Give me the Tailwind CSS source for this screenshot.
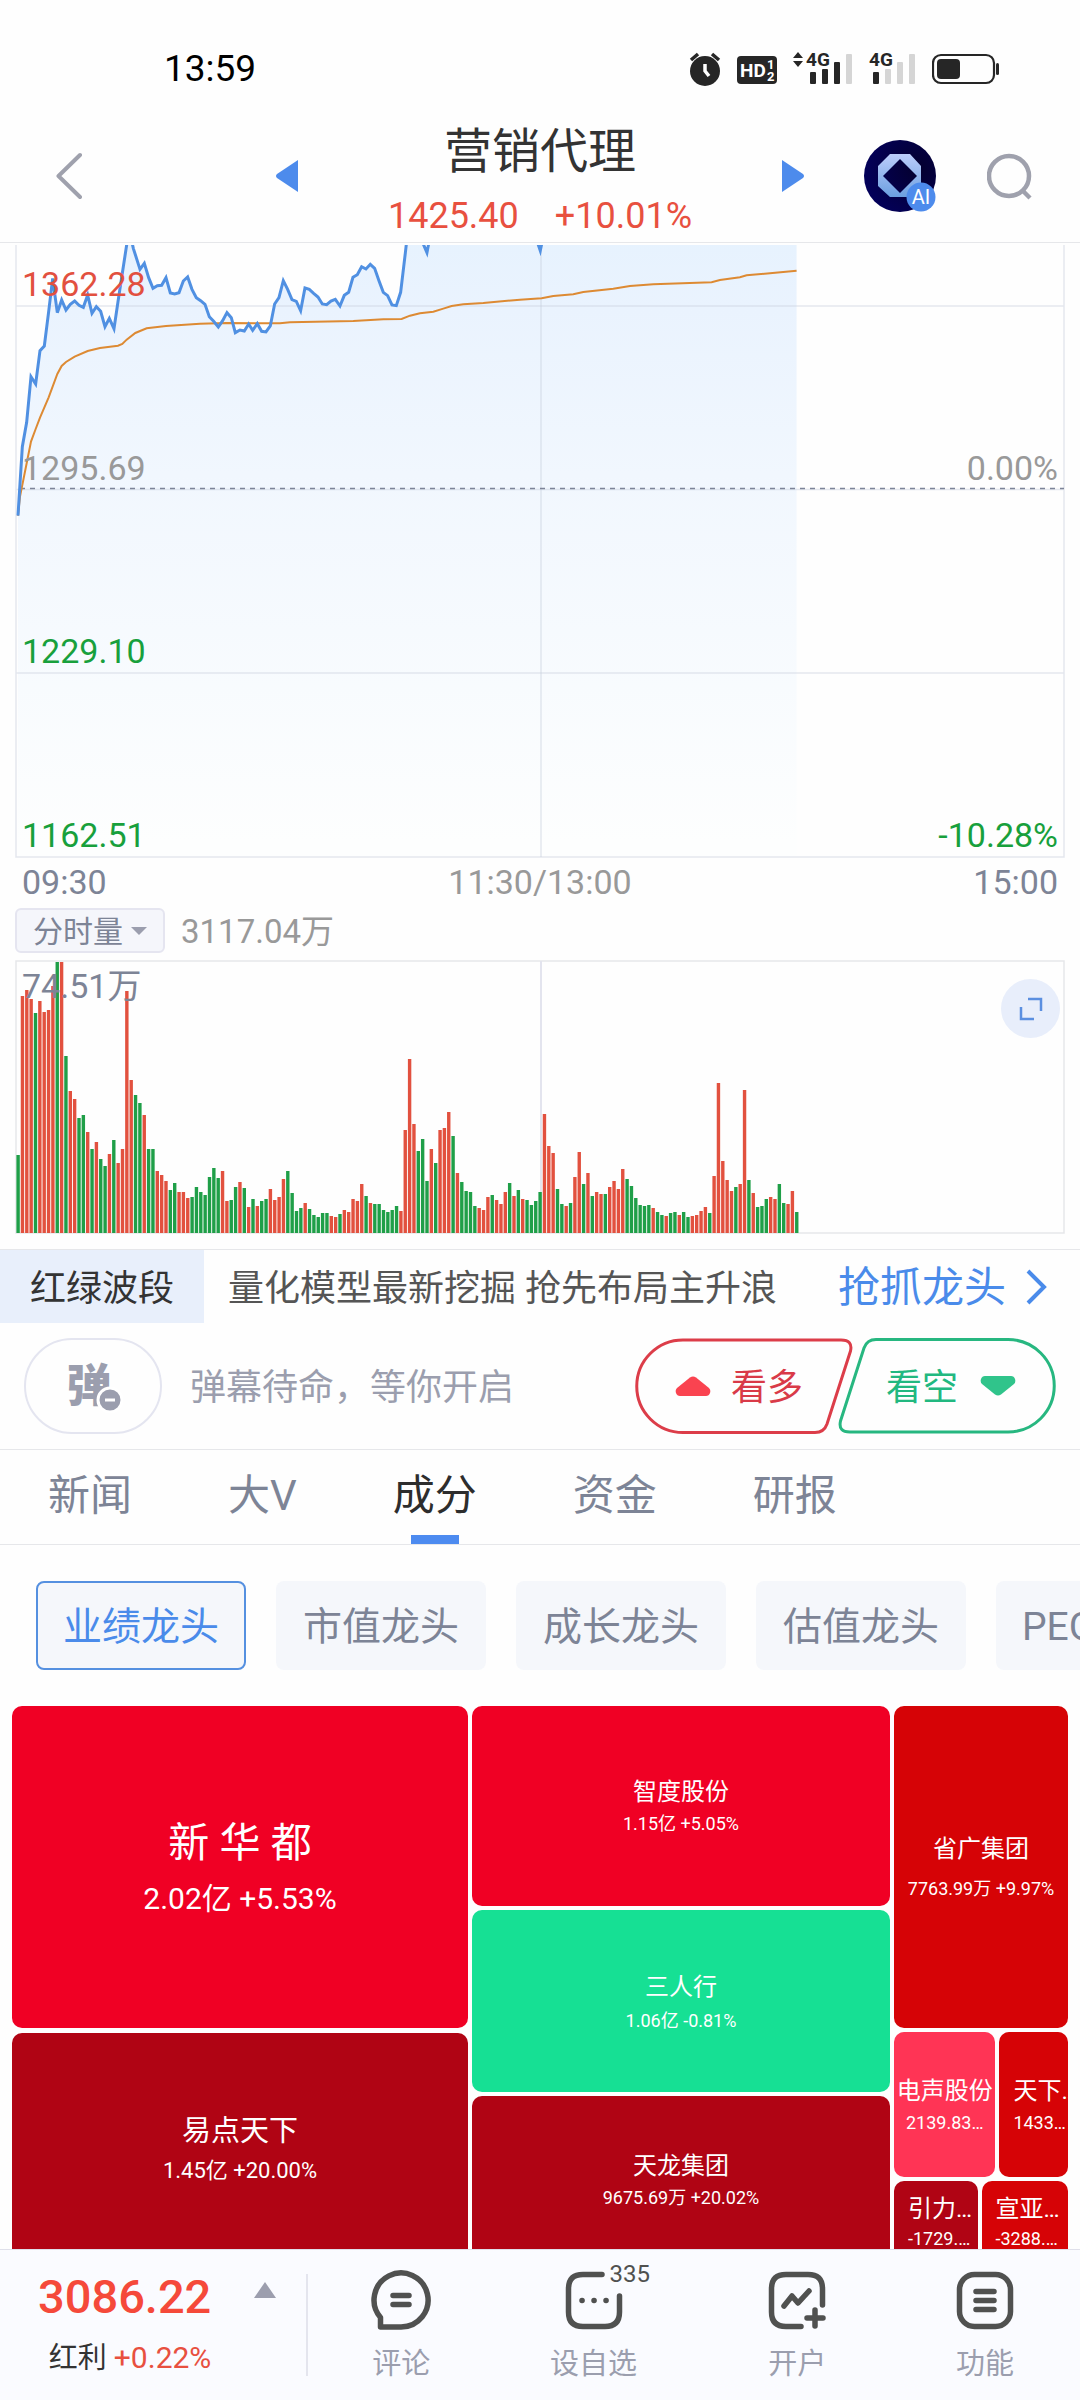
<!DOCTYPE html>
<html lang="zh-CN">
    <head>
        <meta charset="utf-8" />
        <meta name="viewport" content="width=device-width, initial-scale=1" />
        <title>营销代理</title>
        <script src="https://cdn.jsdelivr.net/npm/@tailwindcss/browser@4"></script>
    </head>
<body class="flex flex-col h-screen overflow-hidden bg-[#fefefe] font-['Roboto','Noto_Sans_CJK_SC',sans-serif] text-[#333]">

<!-- Status bar -->
<div class="flex items-center justify-between h-[110px] shrink-0 pt-7 pl-41 pr-20">
    <span class="text-[37px] text-black">13:59</span>
    <div class="flex gap-4">
        <svg class="w-8 h-9" viewBox="0 0 32 36" fill="#262626">
            <circle cx="16" cy="20" r="15"/>
            <path d="M2 9 L9 3 M30 9 L23 3" stroke="#262626" stroke-width="3.5"/>
            <path d="M16 13 V20 L20 25" fill="none" stroke="#fff" stroke-width="3.5"/>
        </svg>
        <svg class="w-10 h-9" viewBox="0 0 40 36">
            <rect y="5" width="40" height="28" rx="4" fill="#262626"/>
            <g fill="#fff" font-weight="700">
                <text x="3" y="26" font-size="19">HD</text>
                <text x="30" y="18" font-size="13">1</text>
                <text x="30" y="30" font-size="13">2</text>
            </g>
        </svg>
        <svg class="w-15 h-9 overflow-visible" viewBox="0 0 60 36" fill="#262626">
            <path d="M0 7 L5 1 L10 7 Z M0 10 H10 L5 16 Z"/>
            <text x="13" y="15" font-size="19" font-weight="700">4G</text>
            <rect x="17" y="21" width="6" height="12" rx="1"/>
            <rect x="29" y="18" width="6" height="15" rx="1"/>
            <rect x="41" y="11" width="6" height="22" rx="1"/>
            <rect x="53" y="3" width="6" height="30" rx="1" fill="#d5d5d5"/>
        </svg>
        <svg class="w-[47px] h-9 overflow-visible" viewBox="0 0 47 36" fill="#d5d5d5">
            <text x="0" y="15" font-size="19" font-weight="700" fill="#262626">4G</text>
            <rect x="4" y="21" width="6" height="12" rx="1" fill="#262626"/>
            <rect x="16" y="18" width="6" height="15" rx="1"/>
            <rect x="28" y="11" width="6" height="22" rx="1"/>
            <rect x="40" y="3" width="6" height="30" rx="1"/>
        </svg>
        <svg class="w-17 h-9" viewBox="0 0 68 36">
            <rect x="1" y="4" width="61" height="28" rx="8" fill="none" stroke="#262626" stroke-width="2.2"/>
            <rect x="5" y="8" width="23" height="20" rx="4" fill="#262626"/>
            <rect x="64" y="12" width="3" height="12" rx="1.5" fill="#262626"/>
        </svg>
    </div>
</div>

<!-- Header -->
<header class="flex items-center h-[133px] shrink-0 pl-14 pr-12 border-b border-[#e6e7ea]">
    <div class="flex items-center justify-between w-[242px]">
        <button aria-label="返回">
            <svg class="w-7 h-12" viewBox="0 0 28 48" fill="none" stroke="#9fa1ad" stroke-width="4" stroke-linecap="round" stroke-linejoin="round"><path d="M24 3 L2.500 24 L24 45"/></svg>
        </button>
        <button aria-label="上一个">
            <svg class="w-[22px] h-8" viewBox="0 0 22 32" fill="#4d8bec"><path d="M22 0 V32 L1 18 Q-1 16 1 14 Z"/></svg>
        </button>
    </div>
    <div class="flex-1 flex flex-col items-center gap-2 pt-2">
        <h1 class="text-5xl leading-16">营销代理</h1>
        <p class="flex gap-9 text-4xl leading-12 text-[#e8503f]"><span>1425.40</span><span>+10.01%</span></p>
    </div>
    <div class="flex items-center">
        <button aria-label="下一个">
            <svg class="w-[22px] h-8" viewBox="0 0 22 32" fill="#4d8bec"><path d="M0 0 V32 L21 18 Q23 16 21 14 Z"/></svg>
        </button>
        <button class="ml-15" aria-label="AI助手">
            <svg class="w-18 h-18" viewBox="0 0 72 72">
                <defs>
                    <linearGradient id="gem" x1="0" y1="0" x2="0" y2="1"><stop offset="0" stop-color="#bccdfb"/><stop offset="1" stop-color="#6b9fe0"/></linearGradient>
                    <radialGradient id="night" cx=".75" cy=".4" r=".8"><stop offset="0" stop-color="#04002e"/><stop offset="1" stop-color="#03005c"/></radialGradient>
                </defs>
                <circle cx="36" cy="36" r="36" fill="url(#night)"/>
                <path d="M26 14 H46 L57 26 V46 L46 57 H26 L14 46 V26 Z M36 19 L19 36 L36 53 L53 36 Z" fill="url(#gem)" fill-rule="evenodd"/>
                <circle cx="57" cy="57" r="14.500" fill="#4d8bec"/>
                <text x="57" y="64" font-size="20" text-anchor="middle" fill="#fff">AI</text>
            </svg>
        </button>
        <button class="ml-[51px]" aria-label="搜索">
            <svg class="w-[45px] h-12" viewBox="0 0 45 48" fill="none" stroke="#9fa1ad" stroke-width="4.500"><circle cx="22" cy="24" r="20"/><path d="M35 38 L43 46"/></svg>
        </button>
    </div>
</header>

<!-- Price chart -->
<svg class="w-full shrink-0 mt-[2px]" viewBox="0 0 1080 613">
    <defs>
        <linearGradient id="area" gradientUnits="userSpaceOnUse" x1="0" y1="0" x2="0" y2="1836">
            <stop offset="0" stop-color="#e6f2fe"/><stop offset=".13" stop-color="#eaf3fe"/><stop offset=".4" stop-color="#f1f7fe"/><stop offset="1" stop-color="#fdfefe"/>
        </linearGradient>
    </defs>
    <g transform="translate(0 -15) scale(.3333)">
        <polygon id="fill" fill="url(#area)"/>
    </g>
    <g fill="none" stroke="#c5cbdc" stroke-opacity=".45" stroke-width="1.500">
        <path d="M16 0 V612 H1064 V0 M16 61 H1064 M16 244.500 H1064 M16 428 H1064"/>
        <path d="M541 0 V612"/>
    </g>
    <path d="M20 243.500 H1064" stroke="#7d8498" stroke-width="1.500" stroke-dasharray="5 5"/>
    <g transform="translate(0 -15) scale(.3333)" fill="none">
        <polyline stroke="#dd8a33" stroke-width="6" points="54,857 60,800 80,700 93,635 107,597 120,563 146,502 172,432 185,408 198,396 224,380 263,363 300,354 354,347 367,342 380,329 406,309 440,295 498,288 600,281 680,279 840,280 870,277 1060,273 1150,268 1205,267 1230,257 1260,250 1300,245 1330,236 1355,228 1390,223 1450,219 1560,209 1625,205 1660,198 1720,193 1750,186 1840,176 1890,168 1960,163 2135,157 2160,150 2220,142 2240,136 2310,130 2390,122"/>
        <polyline id="price" stroke="#5090e2" stroke-width="9" points="54,857 67,650 80,577 93,440 107,462 120,362 133,348 146,245 158,145 172,248 185,210 198,240 211,223 224,213 237,226 250,232 263,195 276,250 289,230 302,244 315,290 328,265 342,296 354,215 367,130 380,45 390,10 400,55 420,118 433,100 446,143 459,175 472,167 485,166 498,143 511,189 524,192 537,188 550,153 563,141 576,178 589,203 602,212 615,223 628,260 641,274 655,291 668,272 681,248 694,263 706,308 720,300 733,303 746,282 758,301 772,281 785,304 798,306 811,288 824,222 837,203 850,152 863,178 876,209 889,214 902,242 915,174 928,178 941,190 954,201 967,222 980,224 993,213 1006,208 1020,228 1033,196 1046,187 1059,142 1072,134 1085,110 1098,117 1111,103 1124,115 1137,152 1150,187 1163,197 1176,225 1189,227 1202,187 1216,70 1224,0 1252,0 1281,68 1294,0 1600,0 1621,62 1634,0 2390,0"/>
    </g>
    <g font-size="34">
        <text x="22" y="51" fill="#e2503f">1362.28</text>
        <text x="22" y="235" fill="#999">1295.69</text>
        <text x="22" y="418" fill="#18a03c">1229.10</text>
        <text x="22" y="602" fill="#18a03c">1162.51</text>
        <text x="1058" y="235" text-anchor="end" fill="#999">0.00%</text>
        <text x="1058" y="602" text-anchor="end" fill="#18a03c">-10.28%</text>
    </g>
</svg>
<div class="flex justify-between shrink-0 pt-px px-[22px] text-[34px] leading-[46px] text-[#7d8496]">
    <span>09:30</span><span class="text-[#999]">11:30/13:00</span><span>15:00</span>
</div>

<!-- Volume chart -->
<div class="flex items-center gap-4 shrink-0 pl-[15px] mt-[3px]">
    <button class="flex items-center gap-2 h-[45px] px-4 rounded-md border-2 border-[#e5e5f0] bg-[#f5f6fb] text-3xl text-[#7d8496]">
        <span class="pt-[2px]">分时量</span>
        <svg class="w-4 h-2" viewBox="0 0 16 8" fill="#9b9eae"><path d="M0 0 H16 L8 8 Z"/></svg>
    </button>
    <span class="pt-[2px] text-[33px] leading-[43px] text-[#999]">3117.04万</span>
</div>
<div class="relative shrink-0 mt-[7px] pb-[15px] border-b border-[#e6e7ea]">
    <svg class="w-full" viewBox="0 0 1080 274">
        <path d="M16 273 V1 H1064 V273 Z" fill="none" stroke="#e6e7ea" stroke-width="1.500"/>
        <path d="M541 1 V273" stroke="#e3e4ee" stroke-width="2"/>
        <g id="bars"></g>
        <text x="22" y="38" font-size="34" fill="#7d8496">74.51万</text>
    </svg>
    <button class="absolute top-[19px] right-5 w-[59px] h-[59px] rounded-full bg-[#e8eefb] flex items-center justify-center" aria-label="全屏">
        <svg class="w-6 h-6" viewBox="0 0 24 24" fill="none" stroke="#5b8fe0" stroke-width="2.500"><path d="M9 2 H22 V14 M2 10 V22 H15"/></svg>
    </button>
</div>

<!-- Promo -->
<div class="flex items-center shrink-0 h-[73px] text-4xl">
    <span class="flex items-center justify-center w-[204px] h-full pt-1 bg-[#e8effb]">红绿波段</span>
    <span class="flex-1 pt-1 pl-6 text-[#555]">量化模型最新挖掘 抢先布局主升浪</span>
    <a href="#" class="flex items-center gap-[18px] pr-8 text-[42px] leading-none text-[#4a8bea]">
        <span class="pt-[2px]">抢抓龙头</span>
        <svg class="w-6 h-9" viewBox="0 0 24 36" fill="none" stroke="#4a8bea" stroke-width="4"><path d="M4 2 L20 18 L4 34"/></svg>
    </a>
</div>

<!-- Danmu -->
<div class="flex items-center shrink-0 h-[127px] px-6 text-4xl border-b border-[#e6e7ea]">
    <button class="relative w-[138px] h-24 rounded-full border-2 border-[#e4e5f0] font-black text-[45px] leading-none text-[#9b9eae]" aria-label="弹幕开关">
        <span class="pr-2">弹</span>
        <svg class="absolute left-[70px] top-[46px] w-7 h-7" viewBox="0 0 28 28"><circle cx="14" cy="14" r="12" fill="#9b9eae" stroke="#fff" stroke-width="3"/><path d="M9 14 H19" stroke="#fff" stroke-width="3"/></svg>
    </button>
    <span class="flex-1 pt-1 pl-7 text-[#9b9eae]">弹幕待命，等你开启</span>
    <button class="relative flex items-center gap-5 w-[218px] h-24 pl-10 text-[#d93a48]">
        <svg class="absolute inset-0 w-full h-full" viewBox="0 0 218 96" fill="none" stroke="#dc3d49" stroke-width="3"><path d="M48 2 H206 Q218 2 215.500 13 L192 86 Q189 94.500 180 94.500 H48 A46.250 46.250 0 0 1 48 2 Z"/></svg>
        <svg class="w-9 h-5" viewBox="0 0 36 20" fill="#fa4350"><path d="M15 1.500 Q18 -.5 21 1.500 L34 12 Q36 14 35 17 Q34 20 31 20 H5 Q2 20 1 17 Q0 14 2 12 Z"/></svg>
        <span class="pt-1">看多</span>
    </button>
    <button class="relative flex items-center gap-[22px] w-[218px] h-24 pl-12 -ml-[15px] text-[#22b880]">
        <svg class="absolute inset-0 w-full h-full" viewBox="0 0 218 96" fill="none" stroke="#27b780" stroke-width="3"><path transform="rotate(180 109 48)" d="M48 2 H206 Q218 2 215.500 13 L192 86 Q189 94.500 180 94.500 H48 A46.250 46.250 0 0 1 48 2 Z"/></svg>
        <span class="pt-1">看空</span>
        <svg class="w-9 h-5" viewBox="0 0 36 20" fill="#30c48b"><path d="M15 18.500 Q18 20.500 21 18.500 L34 8 Q36 6 35 3 Q34 0 31 0 H5 Q2 0 1 3 Q0 6 2 8 Z"/></svg>
    </button>
</div>

<!-- Tabs -->
<nav class="flex gap-24 shrink-0 h-[95px] pl-12 text-[42px] leading-[92px] text-[#7d8496] border-b border-[#e6e7ea]">
    <a href="#">新闻</a>
    <a href="#">大V</a>
    <a href="#" class="relative text-[#2d2d2d]">成分<span class="absolute left-[18px] bottom-0 w-12 h-[9px] bg-[#4d8bf0]"></span></a>
    <a href="#">资金</a>
    <a href="#">研报</a>
</nav>
<div class="flex gap-[30px] shrink-0 pt-9 pl-9 overflow-hidden text-[39px] text-[#7d8496]">
    <button class="shrink-0 w-[210px] h-[89px] pt-1 rounded-lg border-2 border-[#5590e0] bg-[#f5f7fb] text-[#4a8bea]">业绩龙头</button>
    <button class="shrink-0 w-[210px] h-[89px] pt-1 rounded-lg bg-[#f5f7fb]">市值龙头</button>
    <button class="shrink-0 w-[210px] h-[89px] pt-1 rounded-lg bg-[#f5f7fb]">成长龙头</button>
    <button class="shrink-0 w-[210px] h-[89px] pt-1 rounded-lg bg-[#f5f7fb]">估值龙头</button>
    <button class="shrink-0 w-[210px] h-[89px] pt-1 pl-[26px] text-left rounded-lg bg-[#f5f7fb]">PEG龙头</button>
</div>

<!-- Treemap -->
<main class="flex-1 min-h-0 overflow-hidden mt-9 px-3 text-white text-center text-lg leading-7 whitespace-nowrap">
    <div class="grid grid-cols-[456fr_418fr_174fr] gap-1 h-[558px]">
        <div class="grid grid-rows-[322fr_231fr] gap-[5px]">
            <div class="flex flex-col items-center justify-center gap-2 pt-2 rounded-[10px] bg-[#f00024]">
                <b class="font-normal text-[41px] leading-12">新 华 都</b>
                <span class="text-3xl leading-12">2.02亿 +5.53%</span>
            </div>
            <div class="flex flex-col items-center justify-center rounded-[10px] bg-[#b00414]">
                <b class="font-normal text-[29px] leading-11">易点天下</b>
                <span class="text-[22px] leading-9">1.45亿 +20.00%</span>
            </div>
        </div>
        <div class="grid grid-rows-[200fr_182fr_168fr] gap-1">
            <div class="flex flex-col items-center justify-center rounded-[10px] bg-[#f00024]">
                <b class="font-normal text-2xl leading-9">智度股份</b>
                <span>1.15亿 +5.05%</span>
            </div>
            <div class="flex flex-col items-center justify-center rounded-[10px] bg-[#16e094]">
                <b class="font-normal text-2xl leading-10">三人行</b>
                <span>1.06亿 -0.81%</span>
            </div>
            <div class="flex flex-col items-center justify-center rounded-[10px] bg-[#b00414]">
                <b class="font-normal text-2xl leading-9">天龙集团</b>
                <span>9675.69万 +20.02%</span>
            </div>
        </div>
        <div class="grid grid-rows-[322fr_145fr_83fr] gap-1">
            <div class="flex flex-col items-center justify-center gap-2 rounded-[10px] bg-[#d60306]">
                <b class="font-normal text-2xl leading-9">省广集团</b>
                <span>7763.99万 +9.97%</span>
            </div>
            <div class="grid grid-cols-[102fr_69fr] gap-1">
                <div class="flex flex-col items-center justify-center min-w-0 overflow-hidden rounded-[10px] bg-[#ff3455]">
                    <b class="font-normal text-2xl leading-9">电声股份</b>
                    <span>2139.83…</span>
                </div>
                <div class="flex flex-col items-start justify-center min-w-0 overflow-hidden pl-3.5 rounded-[10px] bg-[#d60306]">
                    <b class="font-normal text-2xl leading-9">天下…</b>
                    <span>1433…</span>
                </div>
            </div>
            <div class="grid grid-cols-[84fr_87fr] gap-1">
                <div class="flex flex-col items-start justify-center min-w-0 overflow-hidden pl-3.5 rounded-[10px] bg-[#b00414]">
                    <b class="font-normal text-2xl leading-8">引力…</b>
                    <span>-1729.…</span>
                </div>
                <div class="flex flex-col items-start justify-center min-w-0 overflow-hidden pl-3.5 rounded-[10px] bg-[#d60306]">
                    <b class="font-normal text-2xl leading-8">宣亚…</b>
                    <span>-3288.…</span>
                </div>
            </div>
        </div>
    </div>
</main>

<!-- Bottom bar -->
<footer class="flex shrink-0 h-[151px] border-t border-[#dfe0ea] bg-[#fafbff]">
    <div class="w-[306px] pt-4 pl-[38px] flex gap-[43px]">
        <div class="flex flex-col items-end">
            <span class="text-[47px] leading-[62px] font-medium text-[#f5493a]">3086.22</span>
            <span class="text-[29px] leading-[60px]">红利 <span class="text-3xl text-[#e8503f]">+0.22%</span></span>
        </div>
        <svg class="w-[22px] h-4 mt-4" viewBox="0 0 22 16" fill="#9c9eae"><path d="M11 0 L22 16 H0 Z"/></svg>
    </div>
    <div class="w-[2px] h-[102px] mt-6 bg-[#e4e5ee]"></div>
    <div class="flex-1 grid grid-cols-[187fr_198fr_210fr_166fr] pr-3 pt-5 text-[29px] leading-10 text-[#9b9eae]">
        <a href="#" class="flex flex-col items-center gap-3.5">
            <svg class="w-15 h-15" viewBox="0 0 60 60" fill="none" stroke="#505150" stroke-width="5.500" stroke-linecap="round" stroke-linejoin="round"><path d="M30 57 H9.500 V47.500 A27 27 0 1 1 30 57 Z"/><path d="M22 25.500 H38 M22 34.500 H38"/></svg>
            评论
        </a>
        <a href="#" class="relative flex flex-col items-center gap-3.5">
            <svg class="w-15 h-15" viewBox="0 0 60 60" fill="none" stroke="#505150" stroke-width="5.500" stroke-linecap="round"><path d="M38 4.500 H19 Q4.500 4.500 4.500 19 V42 Q4.500 56.500 19 56.500 H41 Q55.500 56.500 55.500 42 V26"/><path d="M18 30.500 h.1 M30 30.500 h.1 M42 30.500 h.1"/></svg>
            设自选
            <span class="absolute left-1/2 -top-3 ml-4 text-2xl text-[#505150]">335</span>
        </a>
        <a href="#" class="flex flex-col items-center gap-3.5">
            <svg class="w-15 h-15" viewBox="0 0 60 60" fill="none" stroke="#505150" stroke-width="5.500" stroke-linecap="round"><path d="M55.500 35 V19 Q55.500 4.500 41 4.500 H19 Q4.500 4.500 4.500 19 V42 Q4.500 56.500 19 56.500 H34"/><path d="M48 40 V56 M40 48 H56"/><path d="M17 36 L25 26 L31 33 L42 21" stroke-linejoin="round"/></svg>
            开户
        </a>
        <a href="#" class="flex flex-col items-center gap-3.5">
            <svg class="w-15 h-15" viewBox="0 0 60 60" fill="none" stroke="#505150" stroke-width="5.500" stroke-linecap="round"><rect x="4.500" y="4.500" width="51" height="52" rx="15"/><path d="M21 21.500 H39 M21 30.500 H39 M21 39.500 H39"/></svg>
            功能
        </a>
    </div>
</footer>

<script>
    // shade the area below the price line
    let line = document.getElementById("price").getAttribute("points")
    document.getElementById("fill").setAttribute("points", line + " 2390,1881 54,1881")

    // top of each minute's bar, baseline is 849; negative = falling minute
    let tops = [
        -615,138,120,147,-189,153,186,180,108,-36,
        36,-318,423,447,-504,-495,546,-597,576,-627,
        -648,612,-570,639,597,123,390,-435,-459,495,
        -597,-597,663,675,693,-720,-699,726,726,744,
        -741,-711,-726,-735,-681,-654,-684,663,753,-750,
        -711,696,-714,771,-747,768,-753,-747,717,750,
        741,687,-663,-729,-783,-774,759,-777,-795,-801,
        -789,-789,798,801,-792,780,786,747,753,702,
        -738,759,-762,-762,-780,-786,-780,-768,783,540,
        327,522,-603,-567,-693,597,-639,540,534,486,
        -558,669,-696,-723,-726,-768,774,780,741,-735,
        750,762,726,-699,738,-720,747,-750,-765,-753,
        -726,492,588,609,-717,-762,768,-759,681,606,
        -702,669,-738,726,732,-732,711,693,717,657,
        -687,-708,-744,-765,-768,-765,774,-786,-795,798,
        -789,-786,795,-786,-801,798,795,783,771,-789,
        678,399,633,690,723,-711,702,420,-690,729,
        -771,-768,-747,741,747,-702,-759,762,723,-786
    ]
    let bars = ""
    for (let i = 0; i < tops.length; i++) {
        let h = (849 - Math.abs(tops[i])) / 3
        bars += `<rect x="${16.4 + i * 4.35}" y="${273 - h}" width="3.4" height="${h}" fill="${tops[i] > 0 ? "#e2513f" : "#1f9f48"}"/>`
    }
    document.getElementById("bars").innerHTML = bars
</script>
</body>
</html>
